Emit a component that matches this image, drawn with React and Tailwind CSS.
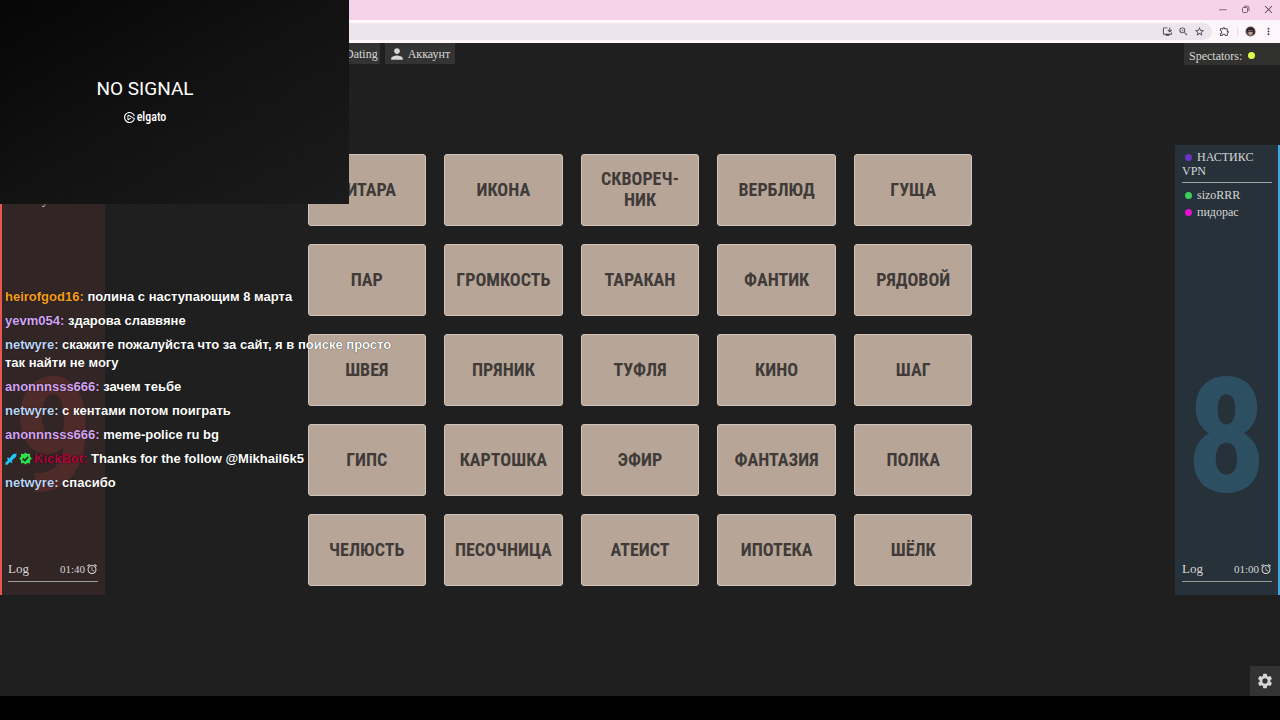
import { useState } from 'react'
import { MdAlarm, MdInstallDesktop, MdMoreVert, MdOutlineExtension, MdPerson, MdSettings, MdStarOutline, MdZoomIn } from 'react-icons/md'
import { VscChromeClose, VscChromeMinimize } from 'react-icons/vsc'
import { SiElgato } from 'react-icons/si'

const WORDS = [
  'ГИТАРА', 'ИКОНА', 'СКВОРЕЧ-НИК', 'ВЕРБЛЮД', 'ГУЩА',
  'ПАР', 'ГРОМКОСТЬ', 'ТАРАКАН', 'ФАНТИК', 'РЯДОВОЙ',
  'ШВЕЯ', 'ПРЯНИК', 'ТУФЛЯ', 'КИНО', 'ШАГ',
  'ГИПС', 'КАРТОШКА', 'ЭФИР', 'ФАНТАЗИЯ', 'ПОЛКА',
  'ЧЕЛЮСТЬ', 'ПЕСОЧНИЦА', 'АТЕИСТ', 'ИПОТЕКА', 'ШЁЛК',
]

const CHAT = [
  { user: 'heirofgod16', color: 'text-[#f59e1b]', text: 'полина с наступающим 8 марта' },
  { user: 'yevm054', color: 'text-[#d3a5f7]', text: 'здарова славвяне' },
  { user: 'netwyre', color: 'text-[#bcd6f7]', text: 'скажите пожалуйста что за сайт, я в поиске просто так найти не могу' },
  { user: 'anonnnsss666', color: 'text-[#d3a5f7]', text: 'зачем теьбе' },
  { user: 'netwyre', color: 'text-[#bcd6f7]', text: 'с кентами потом поиграть' },
  { user: 'anonnnsss666', color: 'text-[#d3a5f7]', text: 'meme-police ru bg' },
  { user: 'KickBot', color: 'text-[#b0063c]', text: 'Thanks for the follow @Mikhail6k5', bot: true },
  { user: 'netwyre', color: 'text-[#bcd6f7]', text: 'спасибо' },
]

const SwordIcon = () => (
  <svg viewBox="0 0 16 16" className="inline-block w-3 h-3 mr-[2px] align-[-2px]" fill="#1fc8f5">
    <path d="M15.5.5 11 1.3 5.6 7.2 4 5.8 2.4 7.4 4.2 9.2.5 12.9v2.6h2.6l3.7-3.7 1.8 1.8 1.6-1.6-1.4-1.6L14.7 5z" />
  </svg>
)

const BadgeIcon = () => (
  <svg viewBox="0 0 16 16" className="inline-block w-[13px] h-[13px] mr-[2px] align-[-2px]">
    <path d="M8 .5 10.2 2.6 13.6 2 13.5 5.4 15.8 8 13.5 10.6 13.6 14 10.2 13.4 8 15.5 5.8 13.4 2.4 14 2.5 10.6.2 8 2.5 5.4 2.4 2 5.8 2.6z" fill="#2fe04b" />
    <path d="m4.6 8.2 2.4 2.4 4.4-4.6" fill="none" stroke="#14301a" strokeWidth="2" />
  </svg>
)

const RestoreIcon = () => (
  <svg viewBox="0 0 22 22" className="w-[11px] h-[11px]" fill="none" stroke="currentColor" strokeWidth="1.5">
    <rect x="5" y="7" width="10" height="10" rx="2" />
    <path d="M8 4.5h7a3 3 0 0 1 3 3V14" />
  </svg>
)

const Dot = ({ className }) => <span className={`inline-block w-[7px] h-[7px] rounded-full ${className}`} />

const BrowserBar = () => (
  <header className="text-[#4a3f47]">
    <div className="h-5 pb-[2px] bg-[#f7d3e9] flex items-center justify-end gap-3 pr-[6px]">
      <button aria-label="Minimize"><VscChromeMinimize className="w-[11px] h-[11px]" /></button>
      <button aria-label="Restore"><RestoreIcon /></button>
      <button aria-label="Close"><VscChromeClose className="w-[11px] h-[11px]" /></button>
    </div>
    <div className="h-[23px] bg-[#fdf6fb] flex items-center gap-[7px] pr-[6px]">
      <div className="flex-1 h-[17px] rounded-full bg-[#eee4ee] flex items-center gap-[5px] pr-[7px]">
        <input aria-label="Address" className="flex-1 min-w-0 bg-transparent outline-none text-xs" />
        <button aria-label="Install"><MdInstallDesktop className="w-[11px] h-[11px]" /></button>
        <button aria-label="Zoom"><MdZoomIn className="w-[11px] h-[11px]" /></button>
        <button aria-label="Bookmark"><MdStarOutline className="w-[11px] h-[11px]" /></button>
      </div>
      <button aria-label="Extensions"><MdOutlineExtension className="w-[11px] h-[11px]" /></button>
      <span className="w-px h-2 bg-[#f7d3e9]" />
      <button aria-label="Profile">
        <svg viewBox="0 0 12 12" className="w-[11px] h-[11px]">
          <circle cx="6" cy="6" r="5.5" fill="#6d5a5c" />
          <path d="M1.5 4.5C2.5 1 8 .3 10 3.2l.8 4-1.5 2.6-1-5-4.8-.3-.5 4.3z" fill="#2d2326" />
          <path d="M3.7 4.8h4.2v4L6 10.3 4.2 8.8z" fill="#c39a92" />
          <path d="M3.5 5.3h4.9v1.2H3.5z" fill="#33262a" />
        </svg>
      </button>
      <button aria-label="Menu"><MdMoreVert className="w-[11px] h-[11px]" /></button>
    </div>
  </header>
)

const Score = ({ value, className }) => (
  <span className={`absolute inset-x-0 top-[212px] text-center text-[160px] leading-[160px] font-bold font-['Roboto_Condensed',Roboto,sans-serif] ${className}`}>{value}</span>
)

const TeamFooter = ({ time }) => (
  <div className="mt-auto mb-[13px] flex items-center justify-between border-b border-[#9b9b9b] h-[25px]">
    <button className="text-[13px]">Log</button>
    <span className="flex items-center gap-px text-[11px]">{time}<MdAlarm className="w-3 h-3" /></span>
  </div>
)

export default function App() {
  const [selected, setSelected] = useState(null)

  return (
    <div className="relative min-h-screen flex flex-col overflow-hidden bg-[#1f1f1f] text-[#d6d6d6] font-['Liberation_Serif',serif]">
      <BrowserBar />

      <div className="flex items-start justify-between">
        <nav className="flex gap-[5px] pl-[333px] text-xs">
          <button className="h-[21px] pr-[2px] pl-3 bg-[#333333]">Dating</button>
          <button className="h-[21px] px-[5px] bg-[#333333] flex items-center gap-1">
            <MdPerson className="w-[14px] h-[14px] scale-125" />Аккаунт
          </button>
        </nav>
        <div className="h-[22px] w-24 pt-[3px] pl-[5px] bg-[#31322f] flex items-center gap-[6px] text-xs">
          Spectators: <Dot className="bg-[#dcff4a]" />
        </div>
      </div>

      <main className="mt-20 flex justify-between">
        <section className="relative w-[105px] shrink-0 flex flex-col border-l-2 border-[#e8564f] bg-[#322525] pl-[6px] pr-[7px]">
          <p className="mt-12 pl-[34px] text-xs leading-[14px]">у</p>
          <Score value={9} className="text-[#4e2a28]" />
          <TeamFooter time="01:40" />
        </section>

        <div className="w-full max-w-[665px] py-[9px] grid grid-cols-5 gap-[18px]">
          {WORDS.map(w => (
            <button
              key={w}
              onClick={() => setSelected(w)}
              className={`h-[72px] px-5 pb-[2px] rounded-[3px] border border-[#d0c5bc] bg-[#b7a698] flex items-center justify-center text-center text-lg leading-[21px] font-bold text-[#403b38] font-['Roboto_Condensed',Roboto,sans-serif] ${selected === w ? 'brightness-110' : ''}`}
            >
              {w}
            </button>
          ))}
        </div>

        <section className="relative w-[105px] shrink-0 flex flex-col border-r-2 border-[#41a5e0] bg-[#263139] pl-[7px] pr-[6px]">
          <p className="mt-[5px] pl-[3px] text-xs leading-[14px]">
            <Dot className="bg-[#6c32c4] mr-[5px]" />НАСТИКС
          </p>
          <p className="pb-1 border-b border-[#9aa3a8] text-xs leading-[14px]">VPN</p>
          <p className="mt-1 pl-[3px] text-xs leading-[17px]"><Dot className="bg-[#3fce5c] mr-[5px]" />sizoRRR</p>
          <p className="pl-[3px] text-xs leading-[17px]"><Dot className="bg-[#e410cf] mr-[5px]" />пидорас</p>
          <Score value={8} className="text-[#2d4f62]" />
          <TeamFooter time="01:00" />
        </section>
      </main>

      <footer className="mt-auto">
        <div className="flex justify-end">
          <button aria-label="Settings" className="w-[30px] h-[30px] bg-[#333333] flex items-center justify-center">
            <MdSettings className="w-[18px] h-[18px]" />
          </button>
        </div>
        <div className="h-6 bg-black" />
      </footer>

      {/* capture card feed */}
      <div className="absolute top-0 left-0 w-[349px] h-[204px] pr-[59px] pb-[2px] flex flex-col items-center justify-center gap-2 bg-linear-to-br from-[#060606] via-[#121212] to-[#1b1b1b] text-white">
        <p className="text-[19px] leading-6 font-['Roboto',sans-serif]">NO SIGNAL</p>
        <p className="flex items-center gap-[2px] text-xs leading-4 font-medium font-['Roboto_Condensed',Roboto,sans-serif]">
          <SiElgato className="w-[11px] h-[11px]" />elgato
        </p>
      </div>

      {/* stream chat */}
      <ul className="absolute top-[288px] left-[5px] w-[390px] space-y-[6px] text-[13px] leading-[18px] font-bold text-white font-['Liberation_Sans',sans-serif] text-shadow-[0_0_1px_#000000]">
        {CHAT.map((m, i) => (
          <li key={i}>
            {m.bot && <><SwordIcon /><BadgeIcon /></>}
            <span className={m.color}>{m.user}:</span> {m.text}
          </li>
        ))}
      </ul>
    </div>
  )
}
